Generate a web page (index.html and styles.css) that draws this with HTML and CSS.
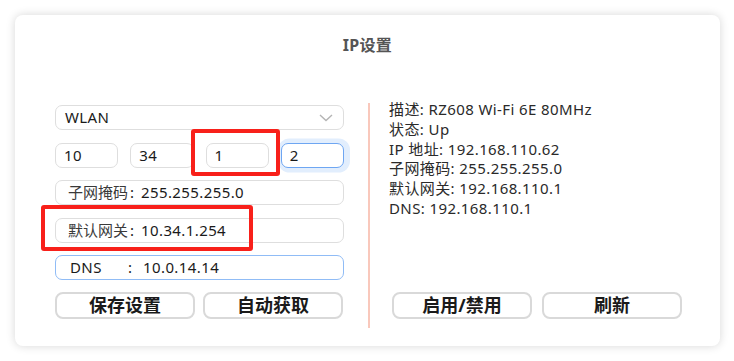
FILE: index.html
```html
<!DOCTYPE html>
<html lang="zh-CN">
<head>
    <meta charset="UTF-8">
    <meta name="viewport" content="width=device-width, initial-scale=1.0">
    <title>IP设置</title>
    <link rel="stylesheet" href="styles.css">
</head>
<body>
    <div class="card">
        <div class="title">IP设置</div>
        <div class="content">
            <div class="left-col">
                <div class="select-box">
                    <span>WLAN</span>
                    <svg class="chevron" width="14" height="8" viewBox="0 0 14 8">
                        <path d="M1 1 L7 6.5 L13 1" fill="none" stroke="#b4b4b4" stroke-width="1.4"/>
                    </svg>
                </div>
                <div class="ip-row">
                    <div class="field ip">10</div>
                    <div class="field ip">34</div>
                    <div class="field ip">1</div>
                    <div class="field ip focused">2</div>
                </div>
                <div class="field wide"><span class="lbl">子网掩码</span><span class="colon">:</span><span class="val">255.255.255.0</span></div>
                <div class="field wide"><span class="lbl">默认网关</span><span class="colon">:</span><span class="val">10.34.1.254</span></div>
                <div class="field wide dns"><span class="lbl">DNS</span><span class="colon">:</span><span class="val">10.0.14.14</span></div>
                <div class="btn-row">
                    <button class="btn">保存设置</button>
                    <button class="btn">自动获取</button>
                </div>
                <span class="mark mark-ip"></span>
                <span class="mark mark-gw"></span>
            </div>
            <div class="divider"></div>
            <div class="right-col">
                <div class="info">
                    <div>描述: RZ608 Wi-Fi 6E 80MHz</div>
                    <div>状态: Up</div>
                    <div>IP 地址: 192.168.110.62</div>
                    <div>子网掩码: 255.255.255.0</div>
                    <div>默认网关: 192.168.110.1</div>
                    <div>DNS: 192.168.110.1</div>
                </div>
                <div class="btn-row right">
                    <button class="btn">启用/禁用</button>
                    <button class="btn">刷新</button>
                </div>
            </div>
        </div>
    </div>
</body>
</html>
```

FILE: styles.css
```css
body {
    margin: 0;
    padding: 15px;
    background-color: #ffffff;
    font-family: "Noto Sans", "Noto Sans CJK SC", sans-serif;
    color: #1a1a1a;
}
.card {
    width: 705px;
    height: 331px;
    box-sizing: border-box;
    padding-top: 20px;
    background-color: #fff;
    border-radius: 8px;
    box-shadow: 0 0 10px rgba(0, 0, 0, 0.16);
}
.title {
    text-align: center;
    font-size: 16px;
    line-height: 20px;
    font-weight: bold;
    color: #555;
    letter-spacing: 0.3px;
}
.content {
    display: flex;
    height: 225px;
    margin-top: 48px;
    padding-left: 40px;
}
.left-col {
    position: relative;
    width: 289px;
    padding-top: 2px;
    display: flex;
    flex-direction: column;
    gap: 12.5px;
}
.select-box,
.field {
    height: 25px;
    box-sizing: border-box;
    border: 1px solid #dedede;
    border-radius: 7px;
    background-color: #fff;
    font-size: 15px;
    line-height: 23px;
    letter-spacing: 0.4px;
    display: flex;
    align-items: center;
}
.select-box {
    justify-content: space-between;
    padding: 0 8px 0 9px;
}
.chevron {
    margin-right: 2px;
}
.ip-row {
    display: flex;
    gap: 12px;
}
.field.ip {
    flex: 1;
    padding-left: 8px;
}
.field.focused {
    border-color: #6ea6f2;
    box-shadow: 1.5px 0 0 4.5px #e2eefd;
}
.field.wide {
    padding-left: 12px;
}
.lbl {
    display: inline-block;
    width: 61px;
    color: #3a3a3a;
    letter-spacing: 0;
}
.colon {
    display: inline-block;
    width: 11px;
    padding-left: 1px;
}
.val {
    margin-left: 0;
}
.field.dns {
    padding-left: 14px;
    border-color: #90bcf6;
}
.field.dns .lbl {
    width: 57px;
    color: #1a1a1a;
    letter-spacing: 0.4px;
}
.field.dns .colon {
    width: 13px;
}
.field.dns .val {
    margin-left: 2px;
}
.btn-row {
    display: flex;
    gap: 8px;
    margin-top: -0.5px;
}
.btn {
    width: 140px;
    height: 27px;
    padding: 0;
    border: 2px solid #d9d9d9;
    border-radius: 8px;
    background-color: #fff;
    font-family: inherit;
    font-size: 18px;
    font-weight: bold;
    line-height: 23px;
    color: #1a1a1a;
}
.mark {
    position: absolute;
    border: 4px solid #f8201a;
    border-radius: 3px;
}
.mark-ip {
    left: 136px;
    top: 26px;
    width: 81px;
    height: 39px;
}
.mark-gw {
    left: -14px;
    top: 102px;
    width: 204px;
    height: 38px;
}
.divider {
    width: 2px;
    margin: 0 19px 0 24px;
    background-color: #f9c8bc;
}
.right-col {
    flex: 1;
    display: flex;
    flex-direction: column;
    justify-content: space-between;
    padding-bottom: 9px;
}
.info {
    margin-top: -3px;
    font-size: 15px;
    line-height: 19.8px;
    letter-spacing: 0.4px;
    color: #2a2a2a;
}
.btn-row.right {
    margin-left: 3px;
    gap: 10px;
}
```
